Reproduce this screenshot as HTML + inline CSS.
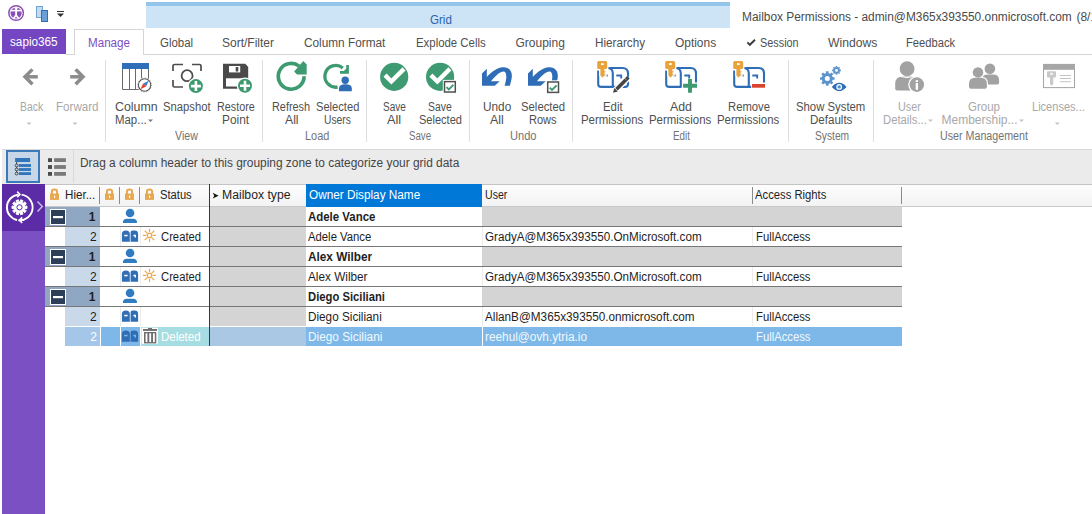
<!DOCTYPE html>
<html><head><meta charset="utf-8"><style>
html,body{margin:0;padding:0;}
body{width:1092px;height:514px;overflow:hidden;position:relative;background:#fff;font-family:"Liberation Sans", sans-serif;}
div,svg{box-sizing:border-box;}
</style></head><body>
<div style="position:absolute;left:146px;top:2px;width:584px;height:4px;background:#93c5ea;"></div>
<div style="position:absolute;left:146px;top:6px;width:584px;height:22px;background:#cde3f6;"></div>
<div style="position:absolute;left:2px;top:29px;width:64px;height:25px;background:#7546c2;"></div>
<div style="position:absolute;left:66px;top:54px;width:8px;height:1px;background:#d5d5d5;"></div>
<div style="position:absolute;left:143px;top:54px;width:949px;height:1px;background:#d5d5d5;"></div>
<div style="position:absolute;left:74px;top:29px;width:70px;height:26px;border:1px solid #d5d5d5;border-bottom:none;background:#fff"></div>
<div style="position:absolute;left:105px;top:60px;width:1px;height:82px;background:#dedede;"></div>
<div style="position:absolute;left:262px;top:60px;width:1px;height:82px;background:#dedede;"></div>
<div style="position:absolute;left:366px;top:60px;width:1px;height:82px;background:#dedede;"></div>
<div style="position:absolute;left:469px;top:60px;width:1px;height:82px;background:#dedede;"></div>
<div style="position:absolute;left:572px;top:60px;width:1px;height:82px;background:#dedede;"></div>
<div style="position:absolute;left:788px;top:60px;width:1px;height:82px;background:#dedede;"></div>
<div style="position:absolute;left:873px;top:60px;width:1px;height:82px;background:#dedede;"></div>
<div style="position:absolute;left:2px;top:149px;width:1090px;height:35px;background:#ebebeb;"></div>
<div style="position:absolute;left:2px;top:149px;width:1090px;height:1px;background:#d8d8d8;"></div>
<div style="position:absolute;left:73px;top:150px;width:1px;height:33px;background:#d9d9d9;"></div>
<div style="position:absolute;left:6px;top:150px;width:34px;height:33px;border:2px solid #3b79b9;background:#c8d7e7"></div>
<div style="position:absolute;left:2px;top:184px;width:43px;height:47px;background:#5c2ba6;"></div>
<div style="position:absolute;left:2px;top:231px;width:43px;height:283px;background:#7b50c3;"></div>
<div style="position:absolute;left:45px;top:184px;width:1047px;height:23px;border-top:1px solid #c4c4c4;border-bottom:1px solid #c8c8c8;background:linear-gradient(#fdfdfd,#f3f3f3)"></div>
<div style="position:absolute;left:306px;top:184px;width:176px;height:23px;background:#0078d7;"></div>
<div style="position:absolute;left:99px;top:187px;width:1px;height:17px;background:#8a8a8a;"></div>
<div style="position:absolute;left:119px;top:187px;width:1px;height:17px;background:#8a8a8a;"></div>
<div style="position:absolute;left:139px;top:187px;width:1px;height:17px;background:#8a8a8a;"></div>
<div style="position:absolute;left:752px;top:187px;width:1px;height:17px;background:#8a8a8a;"></div>
<div style="position:absolute;left:901px;top:187px;width:1px;height:17px;background:#8a8a8a;"></div>
<div style="position:absolute;left:45px;top:207px;width:55px;height:19px;background:#8fa7c3;"></div>
<div style="position:absolute;left:210px;top:207px;width:96px;height:19px;background:#d4d4d4;"></div>
<div style="position:absolute;left:482px;top:207px;width:420px;height:19px;background:#d4d4d4;"></div>
<div style="position:absolute;left:45px;top:226px;width:857px;height:1px;background:#777777;"></div>
<div style="position:absolute;left:65px;top:227px;width:35px;height:19px;background:#c9d9ea;"></div>
<div style="position:absolute;left:210px;top:227px;width:96px;height:19px;background:#d4d4d4;"></div>
<div style="position:absolute;left:120px;top:227px;width:1px;height:19px;background:#ececec;"></div>
<div style="position:absolute;left:140px;top:227px;width:1px;height:19px;background:#ececec;"></div>
<div style="position:absolute;left:482px;top:227px;width:1px;height:19px;background:#ececec;"></div>
<div style="position:absolute;left:752px;top:227px;width:1px;height:19px;background:#ececec;"></div>
<div style="position:absolute;left:45px;top:246px;width:857px;height:1px;background:#777777;"></div>
<div style="position:absolute;left:45px;top:247px;width:55px;height:19px;background:#8fa7c3;"></div>
<div style="position:absolute;left:210px;top:247px;width:96px;height:19px;background:#d4d4d4;"></div>
<div style="position:absolute;left:482px;top:247px;width:420px;height:19px;background:#d4d4d4;"></div>
<div style="position:absolute;left:45px;top:266px;width:857px;height:1px;background:#777777;"></div>
<div style="position:absolute;left:65px;top:267px;width:35px;height:19px;background:#c9d9ea;"></div>
<div style="position:absolute;left:210px;top:267px;width:96px;height:19px;background:#d4d4d4;"></div>
<div style="position:absolute;left:120px;top:267px;width:1px;height:19px;background:#ececec;"></div>
<div style="position:absolute;left:140px;top:267px;width:1px;height:19px;background:#ececec;"></div>
<div style="position:absolute;left:482px;top:267px;width:1px;height:19px;background:#ececec;"></div>
<div style="position:absolute;left:752px;top:267px;width:1px;height:19px;background:#ececec;"></div>
<div style="position:absolute;left:45px;top:286px;width:857px;height:1px;background:#777777;"></div>
<div style="position:absolute;left:45px;top:287px;width:55px;height:19px;background:#8fa7c3;"></div>
<div style="position:absolute;left:210px;top:287px;width:96px;height:19px;background:#d4d4d4;"></div>
<div style="position:absolute;left:482px;top:287px;width:420px;height:19px;background:#d4d4d4;"></div>
<div style="position:absolute;left:45px;top:306px;width:857px;height:1px;background:#777777;"></div>
<div style="position:absolute;left:65px;top:307px;width:35px;height:19px;background:#c9d9ea;"></div>
<div style="position:absolute;left:210px;top:307px;width:96px;height:19px;background:#d4d4d4;"></div>
<div style="position:absolute;left:120px;top:307px;width:1px;height:19px;background:#ececec;"></div>
<div style="position:absolute;left:140px;top:307px;width:1px;height:19px;background:#ececec;"></div>
<div style="position:absolute;left:482px;top:307px;width:1px;height:19px;background:#ececec;"></div>
<div style="position:absolute;left:752px;top:307px;width:1px;height:19px;background:#ececec;"></div>
<div style="position:absolute;left:65px;top:327px;width:35px;height:19px;background:#a4c7e9;"></div>
<div style="position:absolute;left:101px;top:327px;width:19px;height:19px;background:#7db8e8;"></div>
<div style="position:absolute;left:121px;top:327px;width:19px;height:19px;background:#7db8e8;"></div>
<div style="position:absolute;left:141px;top:327px;width:68px;height:19px;background:#a6dde2;"></div>
<div style="position:absolute;left:210px;top:327px;width:96px;height:19px;background:#aac8e4;"></div>
<div style="position:absolute;left:306px;top:327px;width:176px;height:19px;background:#7db8e8;"></div>
<div style="position:absolute;left:483px;top:327px;width:419px;height:19px;background:#7db8e8;"></div>
<div style="position:absolute;left:209px;top:184px;width:1px;height:162px;background:#2b3a4d;"></div>
<svg style="position:absolute;left:0;top:0" width="1092" height="514" viewBox="0 0 1092 514"><circle cx="16.1" cy="13" r="7.3" fill="none" stroke="#8b4fb5" stroke-width="1.5"/><circle cx="16.1" cy="13" r="5.6" fill="#8b4fb5"/><path d="M10.5 10.6 H21.7" stroke="#fff" stroke-width="1.6"/><path d="M16.1 8.6 V15.2 L13.3 18.8 M16.1 15.2 L18.9 18.8" stroke="#fff" stroke-width="1.8" fill="none"/><circle cx="16.1" cy="8.3" r="1.3" fill="#fff"/><rect x="36.5" y="6.5" width="6" height="11" fill="#c8daee" stroke="#6fa2d6" stroke-width="1"/><rect x="41.5" y="10.5" width="6" height="11" fill="#6b9fd7" stroke="#2f6fba" stroke-width="1"/><rect x="57" y="11" width="7" height="1" fill="#333"/><path d="M57 13.5 H64 L60.5 17 Z" fill="#333"/><path d="M37.8 76.8 H25" stroke="#8c8c8c" stroke-width="3.5"/><path d="M31.2 70.6 L25 76.8 L31.2 83" stroke="#8c8c8c" stroke-width="3.5" fill="none" stroke-linecap="square" stroke-linejoin="miter"/><path d="M70.2 76.8 H83" stroke="#8c8c8c" stroke-width="3.5"/><path d="M76.8 70.6 L83 76.8 L76.8 83" stroke="#8c8c8c" stroke-width="3.5" fill="none" stroke-linecap="square" stroke-linejoin="miter"/><path d="M26.5 122.5 H31.5 L29 125 Z" fill="#c4c4c4"/><path d="M72.5 122.5 H77.5 L75 125 Z" fill="#c4c4c4"/><rect x="122" y="63" width="27" height="6" fill="#2f6eb8"/><path d="M122.5 69 V89.5 H146 M129.5 69 V89 M135.5 69 V89 M141.5 69 V81 M148.5 69 V80" stroke="#6a6a6a" stroke-width="1" fill="none"/><circle cx="144.6" cy="85" r="7.6" fill="#fff"/><circle cx="144.6" cy="85" r="6.2" fill="#fff" stroke="#555" stroke-width="1.1"/><circle cx="144.6" cy="85" r="7.0" fill="none" stroke="#777" stroke-width="0.8" stroke-dasharray="1 1.75"/><path d="M148.8 80.8 L146.1 86.5 L143.1 83.5 Z" fill="#3d7cc9"/><path d="M140.4 89.2 L143.1 83.5 L146.1 86.5 Z" fill="#e0452e"/><path d="M173 71 V66 Q173 64.5 174.5 64.5 H183 M192 64.5 H199.5 Q201 64.5 201 66 V71 M173 80 V85.5 Q173 87 174.5 87 H183" stroke="#4d4d4d" stroke-width="1.7" fill="none"/><circle cx="187.1" cy="75.7" r="5.5" fill="none" stroke="#4d4d4d" stroke-width="1.8"/><circle cx="195.9" cy="86.1" r="8.3" fill="#fff"/><circle cx="195.9" cy="86.1" r="7" fill="#3d9a6e"/><path d="M190.9 86.1 H200.9 M195.9 81.1 V91.1" stroke="#fff" stroke-width="2.6"/><path d="M223 63.8 H245.3 L248.2 66.9 V88.7 H223 Z" fill="#4a4a4a"/><rect x="229" y="66" width="11.2" height="6.4" fill="#fff"/><rect x="235.7" y="67" width="2.6" height="4.5" fill="#4a4a4a"/><rect x="226" y="78.3" width="19" height="8.2" fill="#fff"/><circle cx="245" cy="85.7" r="8.3" fill="#fff"/><circle cx="245" cy="85.7" r="7" fill="#3d9a6e"/><path d="M240 85.7 H250 M245 80.7 V90.7" stroke="#fff" stroke-width="2.6"/><path d="M304.09999999999997 76.3 A12.9 12.9 0 1 1 299.14 66.13" stroke="#3e9a70" stroke-width="3.7" fill="none"/><path d="M294.1 71.5 L303.3 61 L306.7 64.5 V74.5 H297 Z" fill="#3e9a70"/><path d="M337.69 87.03 A10.9 10.9 0 1 1 342.81 67.95" stroke="#3e9a70" stroke-width="3.3" fill="none"/><path d="M340 71.1 H343.8 L346.2 68.7 V65.1 H348.9 V73.8 H340 Z" fill="#3e9a70"/><circle cx="345" cy="80.2" r="5" fill="#fff"/><path d="M337.8 92.5 V88 Q337.8 83 345.4 83 Q353 83 353 88 V92.5 Z" fill="#fff"/><circle cx="345.2" cy="80.3" r="3.7" fill="#2f6db7"/><path d="M339 91.3 V88.3 Q339 84.3 345.4 84.3 Q351.8 84.3 351.8 88.3 V91.3 Z" fill="#2f6db7"/><circle cx="394.2" cy="76.9" r="14.1" fill="#3e9a70"/><path d="M385.0 75.10000000000001 L391.4 81.5 L404.0 68.9" stroke="#fff" stroke-width="4.4" fill="none" stroke-linejoin="miter"/><circle cx="440.1" cy="76.9" r="14.1" fill="#3e9a70"/><path d="M430.90000000000003 75.10000000000001 L437.3 81.5 L449.90000000000003 68.9" stroke="#fff" stroke-width="4.4" fill="none" stroke-linejoin="miter"/><rect x="442.8" y="79.9" width="14.5" height="14" fill="#fff"/><rect x="444.5" y="81.60000000000001" width="10.8" height="10.4" fill="#fff" stroke="#505050" stroke-width="1.5"/><path d="M446.5 87.2 L448.8 89.5 L453.40000000000003 84.9" stroke="#3e9a70" stroke-width="1.9" fill="none"/><path transform="translate(0 0)" d="M482 73.4 L486.8 68.8 L486.8 77 C490 73.5 495 68.5 502.3 67.3 C508 66.5 512.5 70.5 511.8 77 C511.5 80 510.5 83 509.9 85.8 L504.5 85.8 C505.5 82.5 506.3 79.5 506.3 76.7 C506.3 73 505 71.6 503.8 71.6 C499 71.6 494.5 77.5 490.9 81.2 L499.7 81.2 L494.7 85.8 L482 85.8 Z" fill="#2f6db7"/><path transform="translate(46 0)" d="M482 73.4 L486.8 68.8 L486.8 77 C490 73.5 495 68.5 502.3 67.3 C508 66.5 512.5 70.5 511.8 77 C511.5 80 510.5 83 509.9 85.8 L504.5 85.8 C505.5 82.5 506.3 79.5 506.3 76.7 C506.3 73 505 71.6 503.8 71.6 C499 71.6 494.5 77.5 490.9 81.2 L499.7 81.2 L494.7 85.8 L482 85.8 Z" fill="#2f6db7"/><rect x="546" y="80.3" width="14.5" height="14" fill="#fff"/><rect x="547.7" y="82.0" width="10.8" height="10.4" fill="#fff" stroke="#505050" stroke-width="1.5"/><path d="M549.7 87.6 L552 89.89999999999999 L556.6 85.3" stroke="#3e9a70" stroke-width="1.9" fill="none"/><path d="M598.2 70.5 V84 Q598.2 86.9 601.2 86.9 H625.0 Q628.0 86.9 628.0 84 V73.5 Q628.0 68 622.5 68 H608.7" stroke="#2f6db7" stroke-width="2.1" fill="none"/><path d="M612.8000000000001 86.9 V73.5 Q612.8000000000001 68.5 608.2 68" stroke="#2f6db7" stroke-width="2.1" fill="none"/><rect x="605.3000000000001" y="74.6" width="2.4" height="1.9" fill="#2f6db7"/><path d="M616.3000000000001 75.5 H621.2 V78.6" stroke="#2f6db7" stroke-width="1.9" fill="none"/><path d="M598.7 61 H605.7 Q607.2 61 607.2 62.5 V67.8 Q607.2 69.1 605.7 69.1 H604.4000000000001 V71.3 H605.5 V72.6 H604.4000000000001 V74.2 H605.5 V75.5 H604.4000000000001 L602.5 77.8 L600.4000000000001 75.6 V69.1 H598.7 Q597.2 69.1 597.2 67.6 V62.5 Q597.2 61 598.7 61 Z" fill="#fff" stroke="#fff" stroke-width="2.4"/><path d="M598.7 61 H605.7 Q607.2 61 607.2 62.5 V67.8 Q607.2 69.1 605.7 69.1 H604.4000000000001 V71.3 H605.5 V72.6 H604.4000000000001 V74.2 H605.5 V75.5 H604.4000000000001 L602.5 77.8 L600.4000000000001 75.6 V69.1 H598.7 Q597.2 69.1 597.2 67.6 V62.5 Q597.2 61 598.7 61 Z" fill="#e8a33d"/><rect x="601.0" y="63.2" width="2.8" height="1.8" fill="#fff"/><path d="M628.4 77.2 L614.6 91.2" stroke="#fff" stroke-width="6.4"/><path d="M628.4 77.2 L616.5 89.2" stroke="#454545" stroke-width="3.6"/><path d="M613 92.8 L614.3 88 L617.8 91.5 Z" fill="#454545"/><path d="M626 79.6 L624.6 78.2" stroke="#fff" stroke-width="0.8"/><path d="M666.2 70.5 V84 Q666.2 86.9 669.2 86.9 H681.5" stroke="#2f6db7" stroke-width="2.1" fill="none"/><path d="M696.0 82.4 V73.5 Q696.0 68 690.5 68 H676.7" stroke="#2f6db7" stroke-width="2.1" fill="none"/><path d="M680.8000000000001 86.9 V73.5 Q680.8000000000001 68.5 676.2 68" stroke="#2f6db7" stroke-width="2.1" fill="none"/><rect x="673.3000000000001" y="74.6" width="2.4" height="1.9" fill="#2f6db7"/><path d="M684.3000000000001 75.5 H689.2 V78.6" stroke="#2f6db7" stroke-width="1.9" fill="none"/><path d="M666.7 61 H673.7 Q675.2 61 675.2 62.5 V67.8 Q675.2 69.1 673.7 69.1 H672.4000000000001 V71.3 H673.5 V72.6 H672.4000000000001 V74.2 H673.5 V75.5 H672.4000000000001 L670.5 77.8 L668.4000000000001 75.6 V69.1 H666.7 Q665.2 69.1 665.2 67.6 V62.5 Q665.2 61 666.7 61 Z" fill="#fff" stroke="#fff" stroke-width="2.4"/><path d="M666.7 61 H673.7 Q675.2 61 675.2 62.5 V67.8 Q675.2 69.1 673.7 69.1 H672.4000000000001 V71.3 H673.5 V72.6 H672.4000000000001 V74.2 H673.5 V75.5 H672.4000000000001 L670.5 77.8 L668.4000000000001 75.6 V69.1 H666.7 Q665.2 69.1 665.2 67.6 V62.5 Q665.2 61 666.7 61 Z" fill="#e8a33d"/><rect x="669.0" y="63.2" width="2.8" height="1.8" fill="#fff"/><path d="M683.1 85.75 H697 M690 79.1 V92.8" stroke="#3d9a6e" stroke-width="3.9"/><path d="M734.2 70.5 V84 Q734.2 86.9 737.2 86.9 H751.2" stroke="#2f6db7" stroke-width="2.1" fill="none"/><path d="M764.0 82.4 V73.5 Q764.0 68 758.5 68 H744.7" stroke="#2f6db7" stroke-width="2.1" fill="none"/><path d="M748.8000000000001 86.9 V73.5 Q748.8000000000001 68.5 744.2 68" stroke="#2f6db7" stroke-width="2.1" fill="none"/><rect x="741.3000000000001" y="74.6" width="2.4" height="1.9" fill="#2f6db7"/><path d="M752.3000000000001 75.5 H757.2 V78.6" stroke="#2f6db7" stroke-width="1.9" fill="none"/><path d="M734.7 61 H741.7 Q743.2 61 743.2 62.5 V67.8 Q743.2 69.1 741.7 69.1 H740.4000000000001 V71.3 H741.5 V72.6 H740.4000000000001 V74.2 H741.5 V75.5 H740.4000000000001 L738.5 77.8 L736.4000000000001 75.6 V69.1 H734.7 Q733.2 69.1 733.2 67.6 V62.5 Q733.2 61 734.7 61 Z" fill="#fff" stroke="#fff" stroke-width="2.4"/><path d="M734.7 61 H741.7 Q743.2 61 743.2 62.5 V67.8 Q743.2 69.1 741.7 69.1 H740.4000000000001 V71.3 H741.5 V72.6 H740.4000000000001 V74.2 H741.5 V75.5 H740.4000000000001 L738.5 77.8 L736.4000000000001 75.6 V69.1 H734.7 Q733.2 69.1 733.2 67.6 V62.5 Q733.2 61 734.7 61 Z" fill="#e8a33d"/><rect x="737.0" y="63.2" width="2.8" height="1.8" fill="#fff"/><rect x="752" y="84" width="13" height="3.7" fill="#d9442c"/><polygon points="832.66,77.28 834.58,77.18 834.58,79.82 832.66,79.72 831.95,81.43 833.38,82.71 831.51,84.58 830.23,83.15 828.52,83.86 828.62,85.78 825.98,85.78 826.08,83.86 824.37,83.15 823.09,84.58 821.22,82.71 822.65,81.43 821.94,79.72 820.02,79.82 820.02,77.18 821.94,77.28 822.65,75.57 821.22,74.29 823.09,72.42 824.37,73.85 826.08,73.14 825.98,71.22 828.62,71.22 828.52,73.14 830.23,73.85 831.51,72.42 833.38,74.29 831.95,75.57" fill="#5d93cc" stroke="#5d93cc" stroke-width="0" stroke-linejoin="round"/><circle cx="827.3" cy="78.5" r="5.2" fill="#5d93cc"/><circle cx="827.3" cy="78.5" r="2.5" fill="#fff"/><polygon points="839.72,69.67 840.93,69.59 840.93,71.21 839.72,71.13 839.29,72.16 840.20,72.96 839.06,74.10 838.26,73.19 837.23,73.62 837.31,74.83 835.69,74.83 835.77,73.62 834.74,73.19 833.94,74.10 832.80,72.96 833.71,72.16 833.28,71.13 832.07,71.21 832.07,69.59 833.28,69.67 833.71,68.64 832.80,67.84 833.94,66.70 834.74,67.61 835.77,67.18 835.69,65.97 837.31,65.97 837.23,67.18 838.26,67.61 839.06,66.70 840.20,67.84 839.29,68.64" fill="#5d93cc" stroke="#5d93cc" stroke-width="0" stroke-linejoin="round"/><circle cx="836.5" cy="70.4" r="3.0" fill="#5d93cc"/><circle cx="836.5" cy="70.4" r="1.4" fill="#fff"/><path d="M831.2 86.9 Q839.2 77.8 847.2 86.9 Q839.2 96 831.2 86.9 Z" fill="#fff" stroke="#fff" stroke-width="2"/><path d="M831.8 86.9 Q839.2 78.6 846.6 86.9 Q839.2 95.2 831.8 86.9 Z" fill="#2f6db7"/><circle cx="839.2" cy="86.9" r="2.9" fill="#fff"/><circle cx="839.2" cy="86.9" r="1.7" fill="#4a8fd0"/><circle cx="907.1" cy="68.7" r="7.4" fill="#a2a2a2"/><path d="M897.2 90.5 Q895.2 90.5 895.2 88.5 V84 Q895.2 76.6 903 76.6 H911 Q918.8 76.6 918.8 84 V88.5 Q918.8 90.5 916.8 90.5 Z" fill="#a2a2a2"/><path d="M899 76.2 Q907 79 915 76.2" stroke="#fff" stroke-width="1" fill="none"/><circle cx="916.8" cy="84.6" r="8.6" fill="#fff"/><circle cx="916.8" cy="84.6" r="7.3" fill="#a2a2a2"/><rect x="915.7" y="80.2" width="2.3" height="1.9" fill="#fff"/><rect x="915.7" y="83.1" width="2.3" height="6.7" fill="#fff"/><circle cx="989.9" cy="68.7" r="5.3" fill="#a2a2a2"/><path d="M982 84.6 V80 Q982 74.6 988 74.6 H993 Q999.1 74.6 999.1 80 V82.6 Q999.1 84.6 997.1 84.6 Z" fill="#a2a2a2"/><circle cx="978" cy="72.4" r="6.3" fill="#fff"/><path d="M968 89.7 V84 Q968 76.8 975 76.8 H981 Q988 76.8 988 84 V89.7 Z" fill="#fff"/><circle cx="978" cy="72.4" r="5.25" fill="#a2a2a2"/><path d="M971 88.7 Q969 88.7 969 86.7 V84 Q969 77.8 975 77.8 H981 Q986.9 77.8 986.9 84 V86.7 Q986.9 88.7 984.9 88.7 Z" fill="#a2a2a2"/><rect x="1043.5" y="64.4" width="31" height="23.2" fill="#fff" stroke="#a4a4a4" stroke-width="1"/><rect x="1043" y="64" width="32" height="5.8" fill="#a6a6a6"/><path d="M1048 71.2 H1055 Q1056 71.2 1056 72.2 V76.5 Q1056 77.5 1055 77.5 H1053.3 V84 L1051.5 85.7 L1050 84 V77.5 H1048 Q1047 77.5 1047 76.5 V72.2 Q1047 71.2 1048 71.2 Z" fill="#c9c9c9"/><rect x="1050.3" y="72.8" width="2.3" height="2" fill="#fff"/><path d="M1059.8 75.5 H1071.1" stroke="#c4c4c4" stroke-width="1"/><path d="M1059.8 78.5 H1071.1" stroke="#c4c4c4" stroke-width="1"/><path d="M1059.8 81.7 H1071.1" stroke="#c4c4c4" stroke-width="1"/><path d="M148.0 119.5 H153.0 L150.5 122.0 Z" fill="#777"/><path d="M928.0 119.5 H933.0 L930.5 122.0 Z" fill="#c4c4c4"/><path d="M1019.0 119.5 H1024.0 L1021.5 122.0 Z" fill="#c4c4c4"/><path d="M1054.8 122.5 H1059.8 L1057.3 125.0 Z" fill="#c4c4c4"/><rect x="15.1" y="158" width="15" height="4" fill="#2f75bb"/><rect x="18.8" y="164.1" width="12.2" height="2.8" fill="#2f75bb"/><rect x="18.8" y="168.1" width="12.2" height="2.8" fill="#2f75bb"/><rect x="18.8" y="172.2" width="12.2" height="2.8" fill="#2f75bb"/><path d="M16.6 162 V173.6" stroke="#444" stroke-width="1"/><circle cx="16.6" cy="165.5" r="1.4" fill="#c8d8e8" stroke="#444" stroke-width="1"/><circle cx="16.6" cy="169.5" r="1.4" fill="#c8d8e8" stroke="#444" stroke-width="1"/><circle cx="16.6" cy="173.6" r="1.4" fill="#c8d8e8" stroke="#444" stroke-width="1"/><rect x="48" y="158.2" width="4" height="3.8" fill="#4a4a4a"/><rect x="54.1" y="158.2" width="11.8" height="3.8" fill="#7a7a7a"/><rect x="48" y="165.1" width="4" height="3.8" fill="#4a4a4a"/><rect x="54.1" y="165.1" width="11.8" height="3.8" fill="#7a7a7a"/><rect x="48" y="172" width="4" height="3.8" fill="#4a4a4a"/><rect x="54.1" y="172" width="11.8" height="3.8" fill="#7a7a7a"/><path d="M21.60 194.63 A12.9 12.9 0 0 1 18.45 220.23" stroke="#ffffff" stroke-width="1.9" fill="none"/><path d="M17.12 220.02 A12.9 12.9 0 0 1 18.45 194.57" stroke="#ffffff" stroke-width="1.9" fill="none"/><path d="M17.2 191.6 L19.9 194.4 L17.2 197.2" stroke="#ffffff" stroke-width="1.6" fill="none"/><path d="M22.2 217.4 L19.4 220.2 L22.2 223" stroke="#ffffff" stroke-width="1.6" fill="none"/><polygon points="24.78,206.17 26.99,206.01 26.99,208.59 24.78,208.43 24.44,209.49 26.32,210.66 24.80,212.74 23.11,211.32 22.21,211.97 23.04,214.03 20.59,214.82 20.06,212.67 18.94,212.67 18.41,214.82 15.96,214.03 16.79,211.97 15.89,211.32 14.20,212.74 12.68,210.66 14.56,209.49 14.22,208.43 12.01,208.59 12.01,206.01 14.22,206.17 14.56,205.11 12.68,203.94 14.20,201.86 15.89,203.28 16.79,202.63 15.96,200.57 18.41,199.78 18.94,201.93 20.06,201.93 20.59,199.78 23.04,200.57 22.21,202.63 23.11,203.28 24.80,201.86 26.32,203.94 24.44,205.11" fill="#ffffff" stroke="#ffffff" stroke-width="0.9" stroke-linejoin="round"/><circle cx="19.5" cy="207.3" r="5.1000000000000005" fill="#ffffff"/><circle cx="19.5" cy="207.3" r="0.1" fill="#fff"/><circle cx="19.5" cy="207.3" r="2.6" fill="#fff" stroke="#5c2ba6" stroke-width="1"/><path d="M37.5 201.6 L42.3 206.6 L37.5 211.6" stroke="#c9b9e6" stroke-width="1.5" fill="none"/><path d="M51.9 194 V191.6 Q51.9 189.6 54.5 189.6 Q57.1 189.6 57.1 191.6 V194" stroke="#e8a850" stroke-width="2" fill="none"/><rect x="50" y="193.6" width="9" height="6.3" fill="#e8a850"/><rect x="54" y="195.6" width="1.2" height="2.3" fill="#fff"/><path d="M106.9 194 V191.6 Q106.9 189.6 109.5 189.6 Q112.1 189.6 112.1 191.6 V194" stroke="#e8a850" stroke-width="2" fill="none"/><rect x="105" y="193.6" width="9" height="6.3" fill="#e8a850"/><rect x="109" y="195.6" width="1.2" height="2.3" fill="#fff"/><path d="M126.9 194 V191.6 Q126.9 189.6 129.5 189.6 Q132.1 189.6 132.1 191.6 V194" stroke="#e8a850" stroke-width="2" fill="none"/><rect x="125" y="193.6" width="9" height="6.3" fill="#e8a850"/><rect x="129" y="195.6" width="1.2" height="2.3" fill="#fff"/><path d="M146.9 194 V191.6 Q146.9 189.6 149.5 189.6 Q152.1 189.6 152.1 191.6 V194" stroke="#e8a850" stroke-width="2" fill="none"/><rect x="145" y="193.6" width="9" height="6.3" fill="#e8a850"/><rect x="149" y="195.6" width="1.2" height="2.3" fill="#fff"/><path d="M212.7 192.8 L218.6 195.7 L212.7 198.6 L214.3 195.7 Z" fill="#111"/><rect x="50" y="209" width="16" height="16" fill="#fff"/><rect x="51" y="210" width="14" height="14" fill="#2c3e58"/><rect x="53" y="216" width="10" height="2.2" fill="#fff"/><circle cx="130.05" cy="213" r="4.3" fill="#2f7cc0"/><path d="M122.8 223 Q122.8 218.8 127 218.8 H133 Q137.05 218.8 137.05 223 Z" fill="#2f7cc0"/><path d="M121.9 241.70000000000002 V234.20000000000002 Q121.9 230.60000000000002 125.85 230.60000000000002 Q129.8 230.60000000000002 129.8 234.20000000000002 V241.70000000000002 Z" fill="#2f6db5"/><path d="M130.6 241.70000000000002 V232.60000000000002 Q130.6 230.60000000000002 132.6 230.60000000000002 H134.5 Q138.1 230.60000000000002 138.1 234.00000000000003 V241.70000000000002 Z" fill="#2f6db5"/><rect x="124.2" y="234.8" width="3.4" height="1.5" fill="#fff"/><path d="M133.4 235.55 H135.3 V237.5" stroke="#fff" stroke-width="1.4" fill="none"/><path d="M152.80 235.40 L156.10 235.40" stroke="#e8a850" stroke-width="1.2"/><path d="M151.83 237.73 L154.17 240.07" stroke="#e8a850" stroke-width="1.2"/><path d="M149.50 238.70 L149.50 242.00" stroke="#e8a850" stroke-width="1.2"/><path d="M147.17 237.73 L144.83 240.07" stroke="#e8a850" stroke-width="1.2"/><path d="M146.20 235.40 L142.90 235.40" stroke="#e8a850" stroke-width="1.2"/><path d="M147.17 233.07 L144.83 230.73" stroke="#e8a850" stroke-width="1.2"/><path d="M149.50 232.10 L149.50 228.80" stroke="#e8a850" stroke-width="1.2"/><path d="M151.83 233.07 L154.17 230.73" stroke="#e8a850" stroke-width="1.2"/><circle cx="149.5" cy="235.4" r="2.2" fill="#fff" stroke="#e8a850" stroke-width="1.3"/><rect x="50" y="249" width="16" height="16" fill="#fff"/><rect x="51" y="250" width="14" height="14" fill="#2c3e58"/><rect x="53" y="256" width="10" height="2.2" fill="#fff"/><circle cx="130.05" cy="253" r="4.3" fill="#2f7cc0"/><path d="M122.8 263 Q122.8 258.8 127 258.8 H133 Q137.05 258.8 137.05 263 Z" fill="#2f7cc0"/><path d="M121.9 281.7 V274.20000000000005 Q121.9 270.6 125.85 270.6 Q129.8 270.6 129.8 274.20000000000005 V281.7 Z" fill="#2f6db5"/><path d="M130.6 281.7 V272.6 Q130.6 270.6 132.6 270.6 H134.5 Q138.1 270.6 138.1 274.0 V281.7 Z" fill="#2f6db5"/><rect x="124.2" y="274.8" width="3.4" height="1.5" fill="#fff"/><path d="M133.4 275.55 H135.3 V277.5" stroke="#fff" stroke-width="1.4" fill="none"/><path d="M152.80 275.40 L156.10 275.40" stroke="#e8a850" stroke-width="1.2"/><path d="M151.83 277.73 L154.17 280.07" stroke="#e8a850" stroke-width="1.2"/><path d="M149.50 278.70 L149.50 282.00" stroke="#e8a850" stroke-width="1.2"/><path d="M147.17 277.73 L144.83 280.07" stroke="#e8a850" stroke-width="1.2"/><path d="M146.20 275.40 L142.90 275.40" stroke="#e8a850" stroke-width="1.2"/><path d="M147.17 273.07 L144.83 270.73" stroke="#e8a850" stroke-width="1.2"/><path d="M149.50 272.10 L149.50 268.80" stroke="#e8a850" stroke-width="1.2"/><path d="M151.83 273.07 L154.17 270.73" stroke="#e8a850" stroke-width="1.2"/><circle cx="149.5" cy="275.4" r="2.2" fill="#fff" stroke="#e8a850" stroke-width="1.3"/><rect x="50" y="289" width="16" height="16" fill="#fff"/><rect x="51" y="290" width="14" height="14" fill="#2c3e58"/><rect x="53" y="296" width="10" height="2.2" fill="#fff"/><circle cx="130.05" cy="293" r="4.3" fill="#2f7cc0"/><path d="M122.8 303 Q122.8 298.8 127 298.8 H133 Q137.05 298.8 137.05 303 Z" fill="#2f7cc0"/><path d="M121.9 321.7 V314.20000000000005 Q121.9 310.6 125.85 310.6 Q129.8 310.6 129.8 314.20000000000005 V321.7 Z" fill="#2f6db5"/><path d="M130.6 321.7 V312.6 Q130.6 310.6 132.6 310.6 H134.5 Q138.1 310.6 138.1 314.0 V321.7 Z" fill="#2f6db5"/><rect x="124.2" y="314.8" width="3.4" height="1.5" fill="#fff"/><path d="M133.4 315.55 H135.3 V317.5" stroke="#fff" stroke-width="1.4" fill="none"/><path d="M121.9 341.7 V334.20000000000005 Q121.9 330.6 125.85 330.6 Q129.8 330.6 129.8 334.20000000000005 V341.7 Z" fill="#2f6db5"/><path d="M130.6 341.7 V332.6 Q130.6 330.6 132.6 330.6 H134.5 Q138.1 330.6 138.1 334.0 V341.7 Z" fill="#2f6db5"/><rect x="124.2" y="334.8" width="3.4" height="1.5" fill="#7db8e8"/><path d="M133.4 335.55 H135.3 V337.5" stroke="#7db8e8" stroke-width="1.4" fill="none"/><rect x="141.6" y="327.7" width="16.3" height="16.1" fill="#fff"/><rect x="143" y="329" width="14" height="1.9" fill="#6d6d6d"/><rect x="148" y="328" width="4" height="1.2" fill="#6d6d6d"/><rect x="144" y="332" width="12.3" height="11.4" fill="#6d6d6d"/><rect x="145.6" y="333.3" width="1.8" height="8.8" fill="#fff"/><rect x="149.3" y="333.3" width="1.8" height="8.8" fill="#fff"/><rect x="153" y="333.3" width="1.8" height="8.8" fill="#fff"/><path d="M747.4 42.3 L749.8 44.8 L755 39.7" stroke="#3a3a3a" stroke-width="1.9" fill="none"/></svg>
<div style="position:absolute;left:429.50px;top:13.84px;font-size:12px;line-height:12px;font-weight:400;color:#2a64b0;white-space:pre;transform:scaleX(0.9638);transform-origin:0 0;">Grid</div>
<div style="position:absolute;left:741.50px;top:10.84px;font-size:12px;line-height:12px;font-weight:400;color:#4a4a4a;white-space:pre;transform:scaleX(0.9901);transform-origin:0 0;">Mailbox Permissions - admin@M365x393550.onmicrosoft.com</div>
<div style="position:absolute;left:1076.40px;top:10.84px;font-size:12px;line-height:12px;font-weight:400;color:#4a4a4a;white-space:pre;">(8/1</div>
<div style="position:absolute;left:10.30px;top:35.84px;font-size:12px;line-height:12px;font-weight:400;color:#ffffff;white-space:pre;transform:scaleX(0.9769);transform-origin:0 0;">sapio365</div>
<div style="position:absolute;left:87.70px;top:36.84px;font-size:12px;line-height:12px;font-weight:400;color:#7a4fc4;white-space:pre;transform:scaleX(0.9682);transform-origin:0 0;">Manage</div>
<div style="position:absolute;left:159.50px;top:36.84px;font-size:12px;line-height:12px;font-weight:400;color:#4f4f4f;white-space:pre;transform:scaleX(0.9553);transform-origin:0 0;">Global</div>
<div style="position:absolute;left:222.00px;top:36.84px;font-size:12px;line-height:12px;font-weight:400;color:#4f4f4f;white-space:pre;">Sort/Filter</div>
<div style="position:absolute;left:304.00px;top:36.84px;font-size:12px;line-height:12px;font-weight:400;color:#4f4f4f;white-space:pre;transform:scaleX(0.9838);transform-origin:0 0;">Column Format</div>
<div style="position:absolute;left:416.00px;top:36.84px;font-size:12px;line-height:12px;font-weight:400;color:#4f4f4f;white-space:pre;transform:scaleX(0.9500);transform-origin:0 0;">Explode Cells</div>
<div style="position:absolute;left:515.50px;top:36.84px;font-size:12px;line-height:12px;font-weight:400;color:#4f4f4f;white-space:pre;">Grouping</div>
<div style="position:absolute;left:594.80px;top:36.84px;font-size:12px;line-height:12px;font-weight:400;color:#4f4f4f;white-space:pre;transform:scaleX(0.9738);transform-origin:0 0;">Hierarchy</div>
<div style="position:absolute;left:674.60px;top:36.84px;font-size:12px;line-height:12px;font-weight:400;color:#4f4f4f;white-space:pre;transform:scaleX(0.9938);transform-origin:0 0;">Options</div>
<div style="position:absolute;left:760.00px;top:36.84px;font-size:12px;line-height:12px;font-weight:400;color:#4f4f4f;white-space:pre;transform:scaleX(0.9044);transform-origin:0 0;">Session</div>
<div style="position:absolute;left:827.60px;top:36.84px;font-size:12px;line-height:12px;font-weight:400;color:#4f4f4f;white-space:pre;transform:scaleX(1.0148);transform-origin:0 0;">Windows</div>
<div style="position:absolute;left:906.00px;top:36.84px;font-size:12px;line-height:12px;font-weight:400;color:#4f4f4f;white-space:pre;transform:scaleX(0.9311);transform-origin:0 0;">Feedback</div>
<div style="position:absolute;left:19.80px;top:101.14px;font-size:12px;line-height:12px;font-weight:400;color:#a8a8a8;white-space:pre;transform:scaleX(0.8671);transform-origin:0 0;">Back</div>
<div style="position:absolute;left:55.50px;top:101.14px;font-size:12px;line-height:12px;font-weight:400;color:#a8a8a8;white-space:pre;transform:scaleX(0.9669);transform-origin:0 0;">Forward</div>
<div style="position:absolute;left:114.60px;top:101.14px;font-size:12px;line-height:12px;font-weight:400;color:#4f4f4f;white-space:pre;transform:scaleX(1.0326);transform-origin:0 0;">Column</div>
<div style="position:absolute;left:114.60px;top:114.14px;font-size:12px;line-height:12px;font-weight:400;color:#4f4f4f;white-space:pre;transform:scaleX(0.9512);transform-origin:0 0;">Map...</div>
<div style="position:absolute;left:162.80px;top:101.14px;font-size:12px;line-height:12px;font-weight:400;color:#4f4f4f;white-space:pre;transform:scaleX(0.9382);transform-origin:0 0;">Snapshot</div>
<div style="position:absolute;left:217.00px;top:101.14px;font-size:12px;line-height:12px;font-weight:400;color:#4f4f4f;white-space:pre;transform:scaleX(0.8974);transform-origin:0 0;">Restore</div>
<div style="position:absolute;left:222.30px;top:114.14px;font-size:12px;line-height:12px;font-weight:400;color:#4f4f4f;white-space:pre;transform:scaleX(0.9887);transform-origin:0 0;">Point</div>
<div style="position:absolute;left:174.70px;top:129.84px;font-size:12px;line-height:12px;font-weight:400;color:#737373;white-space:pre;transform:scaleX(0.8841);transform-origin:0 0;">View</div>
<div style="position:absolute;left:271.50px;top:101.14px;font-size:12px;line-height:12px;font-weight:400;color:#4f4f4f;white-space:pre;transform:scaleX(0.9070);transform-origin:0 0;">Refresh</div>
<div style="position:absolute;left:284.60px;top:114.14px;font-size:12px;line-height:12px;font-weight:400;color:#4f4f4f;white-space:pre;transform:scaleX(1.0182);transform-origin:0 0;">All</div>
<div style="position:absolute;left:315.80px;top:101.14px;font-size:12px;line-height:12px;font-weight:400;color:#4f4f4f;white-space:pre;transform:scaleX(0.9277);transform-origin:0 0;">Selected</div>
<div style="position:absolute;left:323.50px;top:114.14px;font-size:12px;line-height:12px;font-weight:400;color:#4f4f4f;white-space:pre;transform:scaleX(0.8584);transform-origin:0 0;">Users</div>
<div style="position:absolute;left:304.60px;top:129.84px;font-size:12px;line-height:12px;font-weight:400;color:#737373;white-space:pre;transform:scaleX(0.9108);transform-origin:0 0;">Load</div>
<div style="position:absolute;left:382.70px;top:101.14px;font-size:12px;line-height:12px;font-weight:400;color:#4f4f4f;white-space:pre;transform:scaleX(0.8346);transform-origin:0 0;">Save</div>
<div style="position:absolute;left:387.30px;top:114.14px;font-size:12px;line-height:12px;font-weight:400;color:#4f4f4f;white-space:pre;transform:scaleX(1.0655);transform-origin:0 0;">All</div>
<div style="position:absolute;left:428.00px;top:101.14px;font-size:12px;line-height:12px;font-weight:400;color:#4f4f4f;white-space:pre;transform:scaleX(0.8671);transform-origin:0 0;">Save</div>
<div style="position:absolute;left:418.70px;top:114.14px;font-size:12px;line-height:12px;font-weight:400;color:#4f4f4f;white-space:pre;transform:scaleX(0.9191);transform-origin:0 0;">Selected</div>
<div style="position:absolute;left:408.50px;top:129.84px;font-size:12px;line-height:12px;font-weight:400;color:#737373;white-space:pre;transform:scaleX(0.8057);transform-origin:0 0;">Save</div>
<div style="position:absolute;left:483.40px;top:101.14px;font-size:12px;line-height:12px;font-weight:400;color:#4f4f4f;white-space:pre;transform:scaleX(0.9857);transform-origin:0 0;">Undo</div>
<div style="position:absolute;left:490.40px;top:114.14px;font-size:12px;line-height:12px;font-weight:400;color:#4f4f4f;white-space:pre;transform:scaleX(1.0339);transform-origin:0 0;">All</div>
<div style="position:absolute;left:521.00px;top:101.14px;font-size:12px;line-height:12px;font-weight:400;color:#4f4f4f;white-space:pre;transform:scaleX(0.9451);transform-origin:0 0;">Selected</div>
<div style="position:absolute;left:529.40px;top:114.14px;font-size:12px;line-height:12px;font-weight:400;color:#4f4f4f;white-space:pre;transform:scaleX(0.9198);transform-origin:0 0;">Rows</div>
<div style="position:absolute;left:509.60px;top:129.84px;font-size:12px;line-height:12px;font-weight:400;color:#737373;white-space:pre;transform:scaleX(0.9237);transform-origin:0 0;">Undo</div>
<div style="position:absolute;left:603.30px;top:101.14px;font-size:12px;line-height:12px;font-weight:400;color:#4f4f4f;white-space:pre;transform:scaleX(0.9464);transform-origin:0 0;">Edit</div>
<div style="position:absolute;left:581.40px;top:114.14px;font-size:12px;line-height:12px;font-weight:400;color:#4f4f4f;white-space:pre;transform:scaleX(0.9518);transform-origin:0 0;">Permissions</div>
<div style="position:absolute;left:670.30px;top:101.14px;font-size:12px;line-height:12px;font-weight:400;color:#4f4f4f;white-space:pre;transform:scaleX(1.0301);transform-origin:0 0;">Add</div>
<div style="position:absolute;left:649.20px;top:114.14px;font-size:12px;line-height:12px;font-weight:400;color:#4f4f4f;white-space:pre;transform:scaleX(0.9518);transform-origin:0 0;">Permissions</div>
<div style="position:absolute;left:727.50px;top:101.14px;font-size:12px;line-height:12px;font-weight:400;color:#4f4f4f;white-space:pre;transform:scaleX(0.9376);transform-origin:0 0;">Remove</div>
<div style="position:absolute;left:717.40px;top:114.14px;font-size:12px;line-height:12px;font-weight:400;color:#4f4f4f;white-space:pre;transform:scaleX(0.9518);transform-origin:0 0;">Permissions</div>
<div style="position:absolute;left:673.00px;top:129.84px;font-size:12px;line-height:12px;font-weight:400;color:#737373;white-space:pre;transform:scaleX(0.8199);transform-origin:0 0;">Edit</div>
<div style="position:absolute;left:796.00px;top:101.14px;font-size:12px;line-height:12px;font-weight:400;color:#4f4f4f;white-space:pre;transform:scaleX(0.9446);transform-origin:0 0;">Show System</div>
<div style="position:absolute;left:810.30px;top:114.14px;font-size:12px;line-height:12px;font-weight:400;color:#4f4f4f;white-space:pre;transform:scaleX(0.9632);transform-origin:0 0;">Defaults</div>
<div style="position:absolute;left:814.70px;top:129.84px;font-size:12px;line-height:12px;font-weight:400;color:#737373;white-space:pre;transform:scaleX(0.8523);transform-origin:0 0;">System</div>
<div style="position:absolute;left:898.20px;top:101.14px;font-size:12px;line-height:12px;font-weight:400;color:#a8a8a8;white-space:pre;transform:scaleX(0.8998);transform-origin:0 0;">User</div>
<div style="position:absolute;left:882.50px;top:114.14px;font-size:12px;line-height:12px;font-weight:400;color:#a8a8a8;white-space:pre;transform:scaleX(0.9386);transform-origin:0 0;">Details...</div>
<div style="position:absolute;left:968.30px;top:101.14px;font-size:12px;line-height:12px;font-weight:400;color:#a8a8a8;white-space:pre;transform:scaleX(0.9561);transform-origin:0 0;">Group</div>
<div style="position:absolute;left:941.50px;top:114.14px;font-size:12px;line-height:12px;font-weight:400;color:#a8a8a8;white-space:pre;">Membership...</div>
<div style="position:absolute;left:1032.00px;top:101.14px;font-size:12px;line-height:12px;font-weight:400;color:#a8a8a8;white-space:pre;transform:scaleX(0.9206);transform-origin:0 0;">Licenses...</div>
<div style="position:absolute;left:939.50px;top:129.84px;font-size:12px;line-height:12px;font-weight:400;color:#737373;white-space:pre;transform:scaleX(0.8905);transform-origin:0 0;">User Management</div>
<div style="position:absolute;left:79.70px;top:156.84px;font-size:12px;line-height:12px;font-weight:400;color:#444;white-space:pre;transform:scaleX(0.9923);transform-origin:0 0;">Drag a column header to this grouping zone to categorize your grid data</div>
<div style="position:absolute;left:65.40px;top:188.84px;font-size:12px;line-height:12px;font-weight:400;color:#1e1e1e;white-space:pre;transform:scaleX(0.9675);transform-origin:0 0;">Hier...</div>
<div style="position:absolute;left:160.20px;top:188.84px;font-size:12px;line-height:12px;font-weight:400;color:#1e1e1e;white-space:pre;transform:scaleX(0.9318);transform-origin:0 0;">Status</div>
<div style="position:absolute;left:222.20px;top:188.84px;font-size:12px;line-height:12px;font-weight:400;color:#1e1e1e;white-space:pre;transform:scaleX(1.0164);transform-origin:0 0;">Mailbox type</div>
<div style="position:absolute;left:308.50px;top:188.84px;font-size:12px;line-height:12px;font-weight:400;color:#ffffff;white-space:pre;transform:scaleX(0.9807);transform-origin:0 0;">Owner Display Name</div>
<div style="position:absolute;left:484.70px;top:188.84px;font-size:12px;line-height:12px;font-weight:400;color:#1e1e1e;white-space:pre;transform:scaleX(0.8800);transform-origin:0 0;">User</div>
<div style="position:absolute;left:755.20px;top:188.84px;font-size:12px;line-height:12px;font-weight:400;color:#1e1e1e;white-space:pre;transform:scaleX(0.9378);transform-origin:0 0;">Access Rights</div>
<div style="position:absolute;left:88.70px;top:210.84px;font-size:12px;line-height:12px;font-weight:700;color:#1e1e1e;white-space:pre;">1</div>
<div style="position:absolute;left:89.90px;top:230.84px;font-size:12px;line-height:12px;font-weight:400;color:#1e1e1e;white-space:pre;">2</div>
<div style="position:absolute;left:88.70px;top:250.84px;font-size:12px;line-height:12px;font-weight:700;color:#1e1e1e;white-space:pre;">1</div>
<div style="position:absolute;left:89.90px;top:270.84px;font-size:12px;line-height:12px;font-weight:400;color:#1e1e1e;white-space:pre;">2</div>
<div style="position:absolute;left:88.70px;top:290.84px;font-size:12px;line-height:12px;font-weight:700;color:#1e1e1e;white-space:pre;">1</div>
<div style="position:absolute;left:89.90px;top:310.84px;font-size:12px;line-height:12px;font-weight:400;color:#1e1e1e;white-space:pre;">2</div>
<div style="position:absolute;left:90.20px;top:330.84px;font-size:12px;line-height:12px;font-weight:400;color:#ffffff;white-space:pre;">2</div>
<div style="position:absolute;left:160.70px;top:230.84px;font-size:12px;line-height:12px;font-weight:400;color:#1e1e1e;white-space:pre;transform:scaleX(0.9377);transform-origin:0 0;">Created</div>
<div style="position:absolute;left:160.70px;top:270.84px;font-size:12px;line-height:12px;font-weight:400;color:#1e1e1e;white-space:pre;transform:scaleX(0.9377);transform-origin:0 0;">Created</div>
<div style="position:absolute;left:160.80px;top:330.84px;font-size:12px;line-height:12px;font-weight:400;color:#ffffff;white-space:pre;transform:scaleX(0.9561);transform-origin:0 0;">Deleted</div>
<div style="position:absolute;left:308.20px;top:210.84px;font-size:12px;line-height:12px;font-weight:700;color:#1e1e1e;white-space:pre;transform:scaleX(0.9531);transform-origin:0 0;">Adele Vance</div>
<div style="position:absolute;left:308.20px;top:230.84px;font-size:12px;line-height:12px;font-weight:400;color:#1e1e1e;white-space:pre;transform:scaleX(0.9424);transform-origin:0 0;">Adele Vance</div>
<div style="position:absolute;left:308.20px;top:250.84px;font-size:12px;line-height:12px;font-weight:700;color:#1e1e1e;white-space:pre;transform:scaleX(0.9821);transform-origin:0 0;">Alex Wilber</div>
<div style="position:absolute;left:308.20px;top:270.84px;font-size:12px;line-height:12px;font-weight:400;color:#1e1e1e;white-space:pre;transform:scaleX(0.9805);transform-origin:0 0;">Alex Wilber</div>
<div style="position:absolute;left:308.40px;top:290.84px;font-size:12px;line-height:12px;font-weight:700;color:#1e1e1e;white-space:pre;transform:scaleX(0.9377);transform-origin:0 0;">Diego Siciliani</div>
<div style="position:absolute;left:308.40px;top:310.84px;font-size:12px;line-height:12px;font-weight:400;color:#1e1e1e;white-space:pre;transform:scaleX(0.9785);transform-origin:0 0;">Diego Siciliani</div>
<div style="position:absolute;left:308.30px;top:330.84px;font-size:12px;line-height:12px;font-weight:400;color:#f2f8fd;white-space:pre;transform:scaleX(0.9866);transform-origin:0 0;">Diego Siciliani</div>
<div style="position:absolute;left:484.70px;top:230.84px;font-size:12px;line-height:12px;font-weight:400;color:#1e1e1e;white-space:pre;transform:scaleX(0.9715);transform-origin:0 0;">GradyA@M365x393550.OnMicrosoft.com</div>
<div style="position:absolute;left:484.70px;top:270.84px;font-size:12px;line-height:12px;font-weight:400;color:#1e1e1e;white-space:pre;transform:scaleX(0.9715);transform-origin:0 0;">GradyA@M365x393550.OnMicrosoft.com</div>
<div style="position:absolute;left:484.70px;top:310.84px;font-size:12px;line-height:12px;font-weight:400;color:#1e1e1e;white-space:pre;transform:scaleX(0.9781);transform-origin:0 0;">AllanB@M365x393550.onmicrosoft.com</div>
<div style="position:absolute;left:484.70px;top:330.84px;font-size:12px;line-height:12px;font-weight:400;color:#f2f8fd;white-space:pre;transform:scaleX(0.9847);transform-origin:0 0;">reehul@ovh.ytria.io</div>
<div style="position:absolute;left:755.50px;top:230.84px;font-size:12px;line-height:12px;font-weight:400;color:#1e1e1e;white-space:pre;transform:scaleX(0.9394);transform-origin:0 0;">FullAccess</div>
<div style="position:absolute;left:755.50px;top:270.84px;font-size:12px;line-height:12px;font-weight:400;color:#1e1e1e;white-space:pre;transform:scaleX(0.9394);transform-origin:0 0;">FullAccess</div>
<div style="position:absolute;left:755.50px;top:310.84px;font-size:12px;line-height:12px;font-weight:400;color:#1e1e1e;white-space:pre;transform:scaleX(0.9394);transform-origin:0 0;">FullAccess</div>
<div style="position:absolute;left:755.50px;top:330.84px;font-size:12px;line-height:12px;font-weight:400;color:#f2f8fd;white-space:pre;transform:scaleX(0.9394);transform-origin:0 0;">FullAccess</div>
</body></html>
